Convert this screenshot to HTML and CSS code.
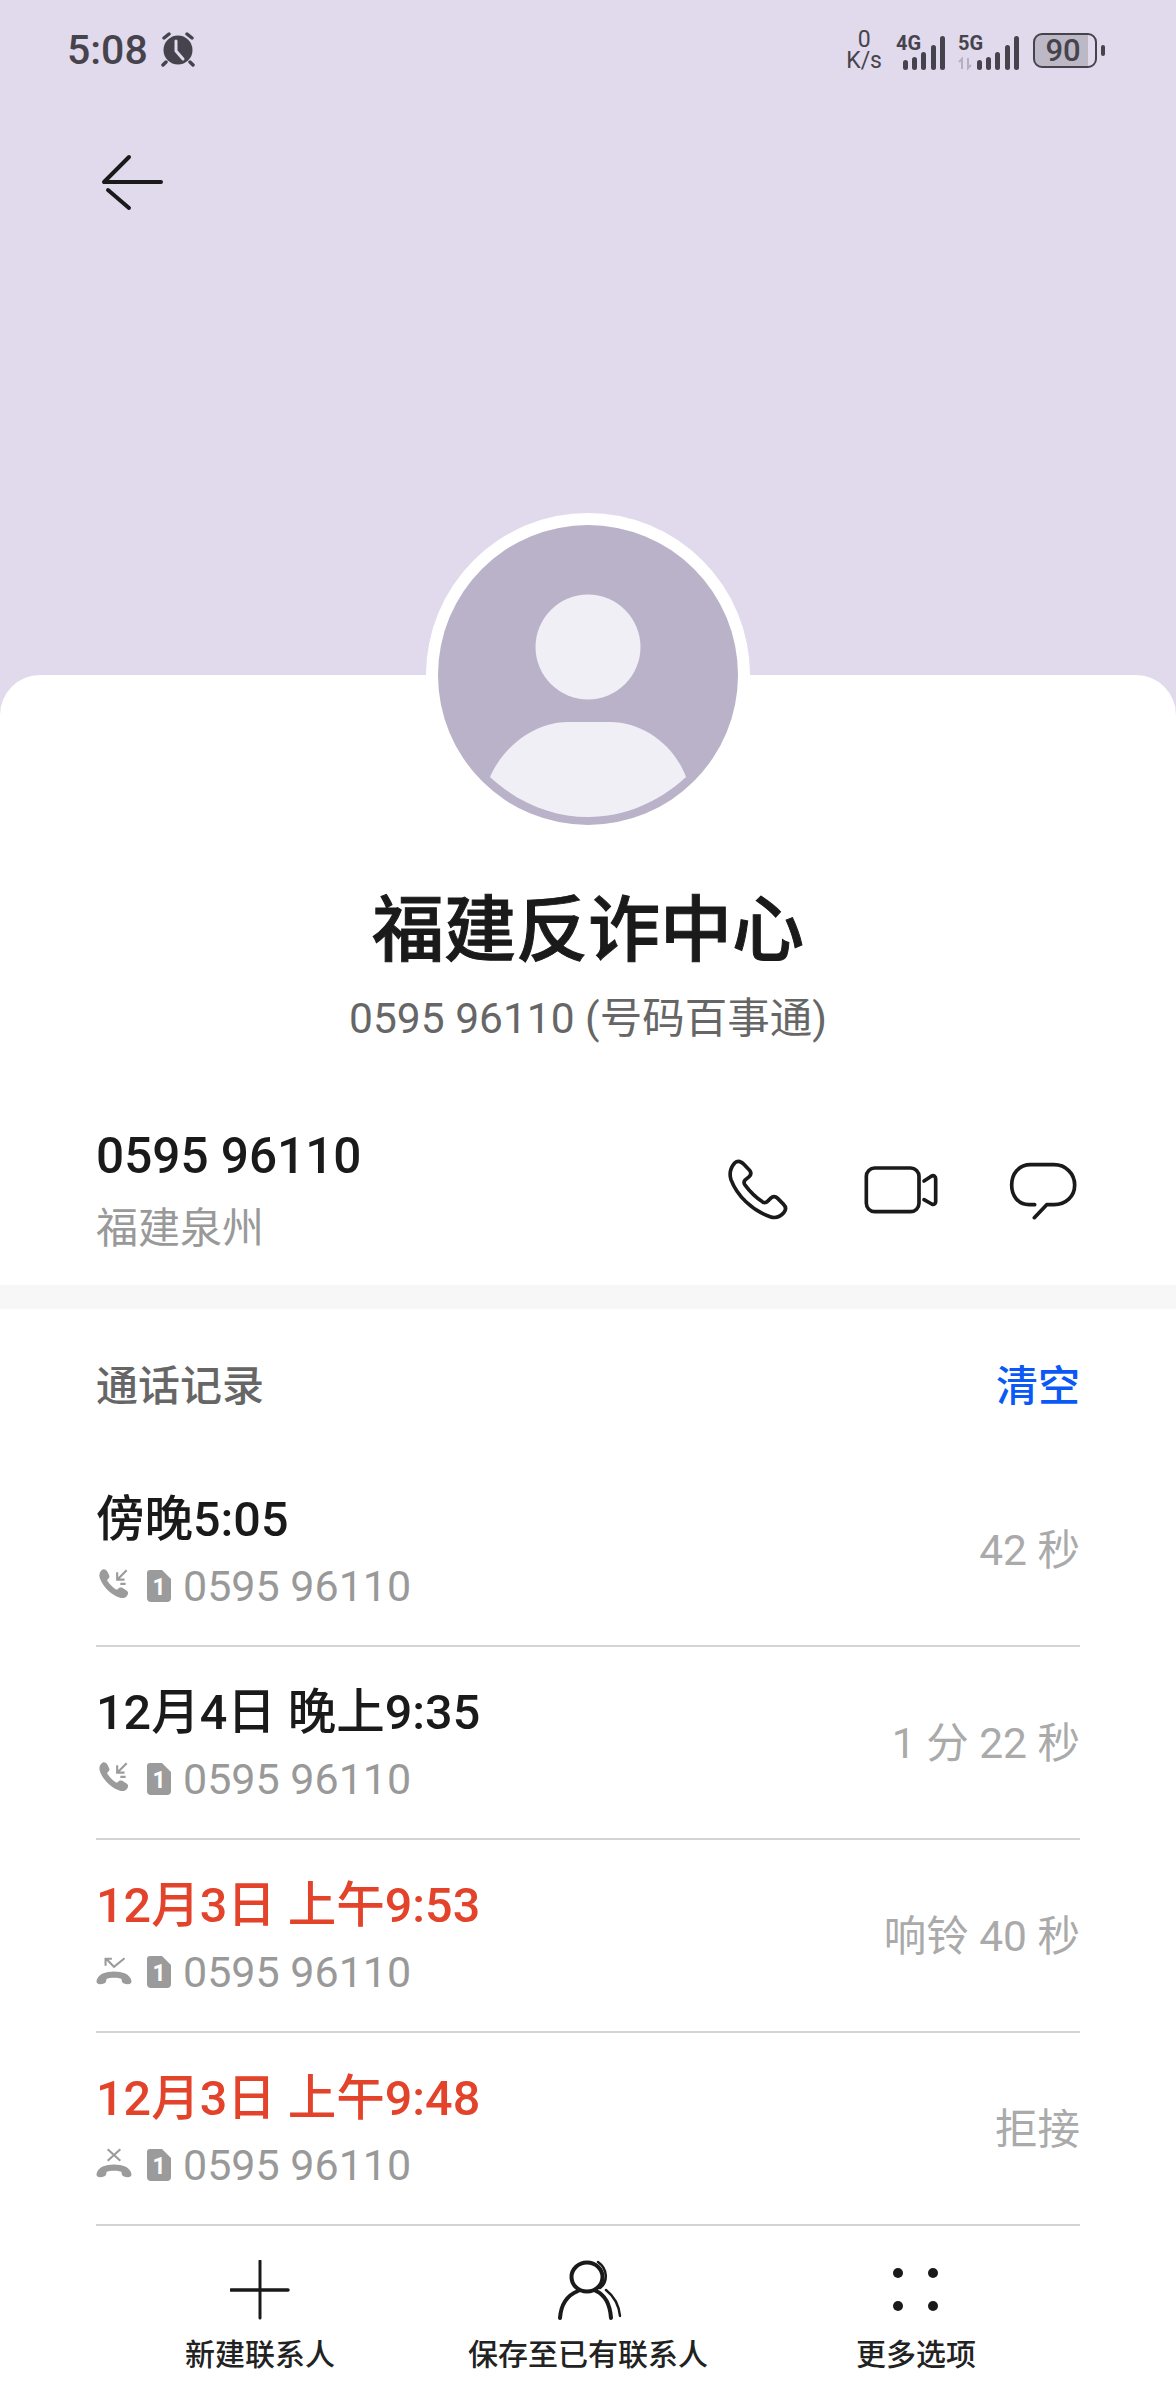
FILE: index.html
```html
<!DOCTYPE html>
<html lang="zh-CN">
<head>
  <meta charset="UTF-8" />
  <meta name="viewport" content="width=device-width, initial-scale=1.0"/>
  <title>福建反诈中心</title>
  <link rel="stylesheet" href="styles.css">
</head>
<body>
  <!-- shared small icons -->
  <svg class="defs" width="0" height="0">
    <symbol id="ic-in" viewBox="0 0 36 36">
      <path class="fill" d="M7 2.5C9 1.5 11 3 12 5L13.5 8C14 9.5 13.5 10.5 12 11.5C11.5 12 11.5 13 12 13.5C14 16.5 16.5 19 19.5 21C20.5 21.5 21 21.5 21.5 21C22.5 19.5 24 19 25.5 19.5L29.5 22C31.5 23 32 25 30.5 27C29 29.5 26 30 23 29C15 26 8 19 5 11.5C3.5 8 4 4.5 7 2.5Z"/>
      <path class="line" d="M30 3L21 12M21 5V12H28M24 16H29"/>
    </symbol>
    <symbol id="ic-missed" viewBox="0 0 36 36">
      <path class="fill" d="M1.5 26C3 20 10 17.5 18 17.5C26 17.5 33 20 34.5 26C35 28.5 33.5 29.5 31 29.5C28.5 29.5 26 29 25.5 27L25 24.5C22 23 14 23 11 24.5L10.5 27C10 29 7.5 29.5 5 29.5C2.5 29.5 1 28.5 1.5 26Z"/>
      <path class="line" d="M28 5L18 13L11 6M10 12V5.5H16"/>
    </symbol>
    <symbol id="ic-reject" viewBox="0 0 36 36">
      <path class="fill" d="M1.5 26C3 20 10 17.5 18 17.5C26 17.5 33 20 34.5 26C35 28.5 33.5 29.5 31 29.5C28.5 29.5 26 29 25.5 27L25 24.5C22 23 14 23 11 24.5L10.5 27C10 29 7.5 29.5 5 29.5C2.5 29.5 1 28.5 1.5 26Z"/>
      <path class="line" d="M12 3L24 14M24 3L12 14"/>
    </symbol>
    <symbol id="ic-sim" viewBox="0 0 24 32">
      <path class="fill" d="M3 0H15L24 9V28C24 30.5 22.5 32 20 32H4C1.5 32 0 30.5 0 28V3C0 1 1 0 3 0Z"/>
    </symbol>
  </svg>

  <div class="page">
    <header class="top">
      <div class="status">
        <div class="status-left">
          <span class="clock">5:08</span>
          <svg class="alarm" width="36" height="36" viewBox="0 0 36 36">
            <circle cx="18" cy="18" r="14.5" fill="#47434d"/>
            <path d="M4 6L9 2M32 6L27 2M6 30L3 33M30 30L33 33" stroke="#47434d" stroke-width="3.5" stroke-linecap="round"/>
            <path d="M16 9V19L23 27" stroke="#e0daec" stroke-width="3" fill="none" stroke-linecap="round"/>
          </svg>
        </div>
        <div class="status-right">
          <div class="speed"><span>0</span><span>K/s</span></div>
          <svg class="net" width="50" height="44" viewBox="0 -8 50 44">
            <text x="0" y="14" class="net-label">4G</text>
            <g fill="#47434d">
              <rect x="7" y="24" width="5" height="10" rx="2.5"/>
              <rect x="16" y="21" width="5" height="13" rx="2.5"/>
              <rect x="25" y="16" width="5" height="18" rx="2.5"/>
              <rect x="35" y="9" width="5" height="25" rx="2.5"/>
              <rect x="44" y="0" width="5" height="34" rx="2.5"/>
            </g>
          </svg>
          <svg class="net" width="62" height="44" viewBox="0 -8 62 44">
            <text x="0" y="14" class="net-label">5G</text>
            <path d="M4 33V23L1 26M10 22V32L13 29" stroke="#b5afbe" stroke-width="2" fill="none"/>
            <g fill="#47434d">
              <rect x="19" y="24" width="5" height="10" rx="2.5"/>
              <rect x="28" y="21" width="5" height="13" rx="2.5"/>
              <rect x="37" y="16" width="5" height="18" rx="2.5"/>
              <rect x="47" y="9" width="5" height="25" rx="2.5"/>
              <rect x="56" y="0" width="5" height="34" rx="2.5"/>
            </g>
          </svg>
          <div class="battery">90</div>
          <span class="battery-tip"></span>
        </div>
      </div>
      <svg class="back" width="64" height="60" viewBox="0 0 64 60">
        <path d="M30 4L5 29H62M9 37L30 55" fill="none" stroke="#1a1a1a" stroke-width="4" stroke-linecap="round" stroke-linejoin="round"/>
      </svg>
    </header>

    <main class="card">
      <div class="avatar">
        <svg width="300" height="300" viewBox="0 0 300 300">
          <circle cx="150" cy="150" r="150" fill="#bab2c8"/>
          <circle cx="150" cy="122" r="52.5" fill="#f0eff5"/>
          <path fill="#f0eff5" d="M52 252C66 220 98 197 130 197H172C205 197 236 220 248 252C220 278 185 292 150 292C115 292 80 278 52 252Z"/>
        </svg>
      </div>
      <h1 class="name">福建反诈中心</h1>
      <p class="source">0595 96110 (号码百事通)</p>

      <section class="contact">
        <div>
          <div class="contact-num">0595 96110</div>
          <div class="contact-loc">福建泉州</div>
        </div>
        <div class="actions">
          <svg width="63" height="63" viewBox="75 85 190 190">
            <path class="stroke" d="M110 92C118 92 123 98 128 103L143 119C149 126 148 132 142 138L130 148C125 153 125 157 129 163C143 182 165 203 183 215C190 219 193 217 198 212L207 203C213 197 221 197 227 203L245 221C253 229 254 238 246 247C235 260 222 265 205 259C150 240 105 195 87 147C80 125 87 110 98 97C102 93 106 92 110 92Z"/>
          </svg>
          <svg class="ic-video" width="76" height="66" viewBox="487 78 228 198">
            <rect class="stroke" x="497" y="111" width="158" height="131" rx="25"/>
            <path class="stroke" d="M670 150L693 135C700 132 705 137 705 143V212C705 218 700 222 693 219L670 206"/>
          </svg>
          <svg width="70" height="66" viewBox="927 78 210 198">
            <path class="stroke" d="M1007 221H990C958 221 938 195 938 162C938 128 960 101 995 101H1065C1100 101 1127 128 1127 162C1127 197 1100 221 1065 221H1043L1006 260"/>
          </svg>
        </div>
      </section>

      <section class="log">
        <div class="log-head">
          <span class="log-title">通话记录</span>
          <span class="log-clear">清空</span>
        </div>
        <div class="log-row">
          <div class="log-main">
            <div class="log-time">傍晚5:05</div>
            <div class="log-sub"><svg class="ic-type"><use href="#ic-in"/></svg><svg class="ic-sim" viewBox="0 0 24 32"><use href="#ic-sim"/><text x="12" y="25" text-anchor="middle" class="sim-num">1</text></svg><span>0595 96110</span></div>
          </div>
          <div class="log-len">42 秒</div>
        </div>
        <div class="log-row">
          <div class="log-main">
            <div class="log-time">12月4日 晚上9:35</div>
            <div class="log-sub"><svg class="ic-type"><use href="#ic-in"/></svg><svg class="ic-sim" viewBox="0 0 24 32"><use href="#ic-sim"/><text x="12" y="25" text-anchor="middle" class="sim-num">1</text></svg><span>0595 96110</span></div>
          </div>
          <div class="log-len">1 分 22 秒</div>
        </div>
        <div class="log-row missed">
          <div class="log-main">
            <div class="log-time">12月3日 上午9:53</div>
            <div class="log-sub"><svg class="ic-type"><use href="#ic-missed"/></svg><svg class="ic-sim" viewBox="0 0 24 32"><use href="#ic-sim"/><text x="12" y="25" text-anchor="middle" class="sim-num">1</text></svg><span>0595 96110</span></div>
          </div>
          <div class="log-len">响铃 40 秒</div>
        </div>
        <div class="log-row missed">
          <div class="log-main">
            <div class="log-time">12月3日 上午9:48</div>
            <div class="log-sub"><svg class="ic-type"><use href="#ic-reject"/></svg><svg class="ic-sim" viewBox="0 0 24 32"><use href="#ic-sim"/><text x="12" y="25" text-anchor="middle" class="sim-num">1</text></svg><span>0595 96110</span></div>
          </div>
          <div class="log-len">拒接</div>
        </div>
      </section>
    </main>

    <nav class="bottom">
      <div class="bottom-item">
        <svg width="60" height="60" viewBox="0 0 60 60">
          <path d="M1 30H58" stroke="#1a1a1a" stroke-width="3.5" stroke-linecap="round"/>
          <path d="M30 1V58" stroke="#1a1a1a" stroke-width="3" stroke-linecap="round"/>
        </svg>
        <span>新建联系人</span>
      </div>
      <div class="bottom-item">
        <svg class="ic-person" width="66" height="60" viewBox="0 0 66 60">
          <ellipse cx="29" cy="17" rx="15.5" ry="14.5" fill="none" stroke="#1a1a1a" stroke-width="4"/>
          <path d="M2 58C3 44 10 35 20 31M38 31C47 35 52 44 53 58" fill="none" stroke="#1a1a1a" stroke-width="4" stroke-linecap="round"/>
          <path d="M40 2C50 9 50 22 42 28M48 30C57 37 61 46 62 56" fill="none" stroke="#1a1a1a" stroke-width="2.5" stroke-linecap="round"/>
        </svg>
        <span>保存至已有联系人</span>
      </div>
      <div class="bottom-item">
        <svg width="60" height="60" viewBox="0 0 60 60" fill="#1a1a1a">
          <circle cx="12" cy="13" r="5"/>
          <circle cx="47" cy="13" r="5"/>
          <circle cx="12" cy="46" r="5"/>
          <circle cx="47" cy="46" r="5"/>
        </svg>
        <span>更多选项</span>
      </div>
    </nav>
  </div>
</body>
</html>
```

FILE: styles.css
```css
*{box-sizing:border-box;margin:0;padding:0;}
body{font-family:Roboto,"Noto Sans CJK SC",sans-serif;background:#fff;color:#1a1a1a;}
.defs{display:block;}
.fill{fill:#9b9b9b;}
.line{fill:none;stroke:#9b9b9b;stroke-width:2;}
.sim-num{font:700 23px Roboto,sans-serif;fill:#fff;}
.stroke{fill:none;stroke:#1a1a1a;stroke-width:11;stroke-linecap:round;stroke-linejoin:round;}

.page{width:1176px;height:2400px;display:flex;flex-direction:column;overflow:hidden;}

/* lavender header */
.top{height:715px;background:#e0daec;flex:none;}
.status{display:flex;justify-content:space-between;align-items:center;height:100px;padding:0 71px 0 67px;color:#47434d;}
.status-left{display:flex;align-items:center;gap:12px;}
.clock{font-size:41px;font-weight:500;line-height:48px;}
.status-right{display:flex;align-items:center;}
.speed{display:flex;flex-direction:column;align-items:center;font-size:23px;line-height:21px;margin-right:14px;}
.net{margin-right:12px;}
.net-label{font:700 20px Roboto,sans-serif;fill:#47434d;}
.battery{width:64px;height:35px;display:flex;align-items:center;justify-content:center;margin-left:1px;padding-right:4px;border:2.5px solid #47434d;border-radius:9px;background:linear-gradient(to right,#bdb8c5 88%,transparent 88%);font-size:31px;font-weight:500;}
.battery-tip{width:4px;height:11px;background:#47434d;border-radius:2px;margin-left:4px;}
.back{display:block;margin:53px 0 0 99px;}

/* white sheet */
.card{position:relative;flex:1;min-height:0;margin-top:-40px;background:#fff;border-radius:40px 40px 0 0;display:flex;flex-direction:column;}
.avatar{width:324px;height:324px;margin:-162px auto 0;padding:12px;background:#fff;border-radius:50%;}
.avatar svg{display:block;}
.name{margin-top:49px;font-size:72px;line-height:90px;font-weight:500;-webkit-text-stroke:1px #1a1a1a;text-align:center;}
.source{margin-top:15px;font-size:42.5px;line-height:56px;color:#666;text-align:center;}

.contact{height:262px;padding:77px 96px 0;display:flex;justify-content:space-between;border-bottom:24px solid #f7f7f7;}
.contact-num{font-size:49.5px;line-height:64px;font-weight:500;}
.contact-loc{margin-top:13px;font-size:42px;line-height:56px;color:#999;}
.actions{display:flex;align-items:center;height:90px;margin:21px 2px 0 0;}
.ic-video{margin:0 69px 0 73px;}

.log{padding:0 96px;flex:1;min-height:0;overflow:hidden;}
.log-head{display:flex;justify-content:space-between;align-items:center;height:145px;padding-top:2px;font-size:42px;}
.log-title{color:#666;font-weight:500;}
.log-clear{color:#0a59f7;font-weight:500;}
.log-row{display:flex;justify-content:space-between;align-items:center;height:193px;border-bottom:2px solid #d4d4d4;}
.log-main{padding-top:3px;}
.log-time{font-size:48.5px;line-height:64px;font-weight:500;}
.log-sub{display:flex;align-items:center;margin-top:6px;height:56px;font-size:43px;color:#999;}
.ic-type{width:38px;height:38px;margin-left:-1px;}
.ic-sim{width:24px;height:32px;margin:0 12px 0 14px;}
.log-len{font-size:42.5px;color:#aaa;padding-bottom:6px;}
.missed .log-time{color:#e2432a;}

/* bottom actions */
.bottom{flex:none;height:174px;padding:34px 96px 0;display:grid;grid-template-columns:repeat(3,1fr);background:#fff;}
.bottom-item{display:flex;flex-direction:column;align-items:center;font-size:30px;font-weight:500;color:#222;}
.bottom-item svg{display:block;}
.ic-person{margin-left:6px;}
.bottom-item span{margin-top:13px;line-height:44px;}
```
